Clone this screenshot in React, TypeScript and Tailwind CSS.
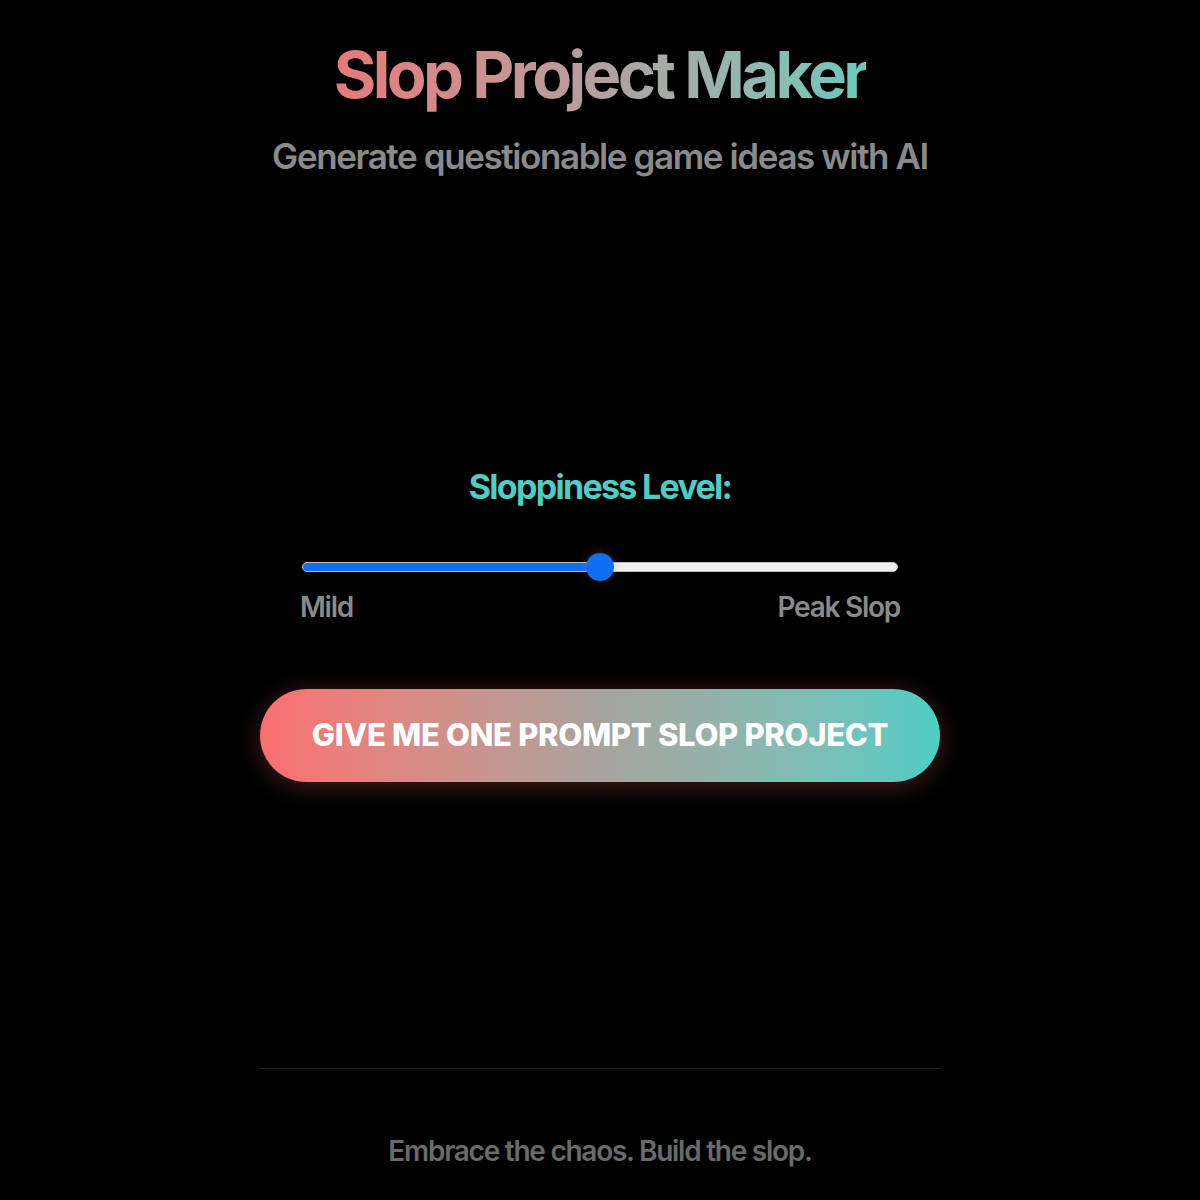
import React, { useState } from "react";

export default function App() {
  const [level, setLevel] = useState(50);

  return (
    <div
      className="min-h-screen w-full bg-black text-white"
      style={{ fontFamily: "Inter, 'Noto Sans', sans-serif" }}
    >
      <div className="mx-auto flex w-[680px] flex-col items-center pt-[36px]">
        {/* Header */}
        <h1 className="bg-gradient-to-r from-[#e77979] via-[#b3a0a0] to-[#6cc8bc] bg-clip-text text-[65px] font-bold leading-[78px] tracking-[-0.055em] text-transparent">
          Slop Project Maker
        </h1>
        <p className="mt-[22px] text-[35px] font-semibold leading-[40px] tracking-[-0.04em] text-[#8a8a8a]">
          Generate questionable game ideas with AI
        </p>

        {/* Sloppiness */}
        <div className="mt-[291px] text-[34px] font-bold leading-[40px] tracking-[-0.05em] text-[#4ecdc4]">
          Sloppiness Level:
        </div>

        <div className="mt-[45px] w-[600px]">
          <div className="relative h-[30px]">
            <div className="absolute left-[2px] right-[2px] top-[10px] h-[10px] overflow-hidden rounded-full border border-[#bdbdbd] bg-[#efefef]">
              <div className="h-full bg-[#0f6ff2]" style={{ width: `${level}%` }} />
            </div>
            <div
              className="absolute top-[1px] h-[28px] w-[28px] -translate-x-1/2 rounded-full bg-[#0f6ff2] shadow-[0_0_8px_rgba(255,120,120,0.25)]"
              style={{ left: `${level}%` }}
            />
            <input
              type="range"
              min={0}
              max={100}
              value={level}
              onChange={(e) => setLevel(Number(e.target.value))}
              className="absolute inset-0 h-full w-full cursor-pointer opacity-0"
            />
          </div>
          <div className="mt-[9px] flex justify-between text-[28px] font-semibold leading-[32px] tracking-[-0.045em] text-[#8a8a8a]">
            <span>Mild</span>
            <span>Peak Slop</span>
          </div>
        </div>

        {/* Button */}
        <button
          type="button"
          className="mt-[66px] h-[93px] w-full rounded-full bg-gradient-to-r from-[#fb6f6f] via-[#a8a39e] to-[#4ecdc4] text-[31px] font-extrabold tracking-[-0.01em] text-white shadow-[0_4px_24px_rgba(255,107,107,0.28)]"
        >
          GIVE ME ONE PROMPT SLOP PROJECT
        </button>

        {/* Footer */}
        <div className="mt-[286px] h-px w-full bg-[#222222]" />
        <div className="mt-[65px] text-[28px] font-semibold leading-[34px] tracking-[-0.045em] text-[#6a6a6a]">
          Embrace the chaos. Build the slop.
        </div>
      </div>
    </div>
  );
}
